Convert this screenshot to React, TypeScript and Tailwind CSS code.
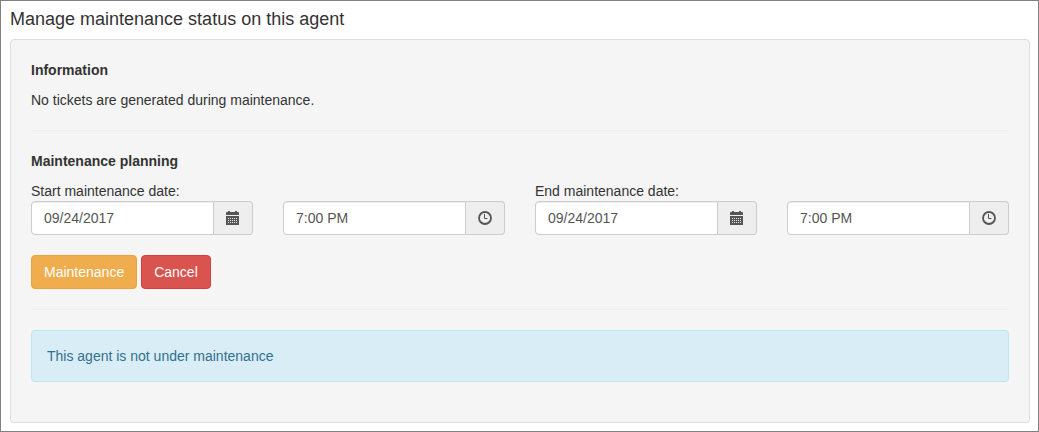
import { useId, useState } from "react";

function CalendarIcon() {
  return (
    <svg viewBox="0 0 14 14" className="block h-3.5 w-3.5" fill="currentColor" aria-hidden="true">
      <path d="M0 4V2Q0 1 1 1H2V0H4V1H9V0H11V1H12Q13 1 13 2V4Z" />
      <path
        fillRule="evenodd"
        d="M0 5H13V13.5Q13 14 12.5 14H0.5Q0 14 0 13.5ZM4 7H5V8H4ZM6 7H7V8H6ZM8 7H9V8H8ZM10 7H11V8H10ZM2 9H3V10H2ZM4 9H5V10H4ZM6 9H7V10H6ZM8 9H9V10H8ZM10 9H11V10H10ZM2 11H3V12H2ZM4 11H5V12H4ZM6 11H7V12H6ZM8 11H9V12H8ZM2 7H3V8H2ZM10 11H11V12H10Z"
      />
    </svg>
  );
}

function ClockIcon() {
  return (
    <svg viewBox="0 0 14 14" className="block h-3.5 w-3.5" fill="none" stroke="currentColor" aria-hidden="true">
      <circle cx="7" cy="7" r="6" strokeWidth="1.8" />
      <path d="M6.5 3V7.5H9.5" strokeWidth="1" />
    </svg>
  );
}

type FieldProps = {
  label: string;
  showLabel?: boolean;
  initial: string;
  kind: "date" | "time";
};

function PickerField({ label, showLabel = false, initial, kind }: FieldProps) {
  const id = useId();
  const [value, setValue] = useState(initial);
  return (
    <div className="flex min-w-0 flex-col justify-end">
      {showLabel && <label htmlFor={id}>{label}</label>}
      <div className="flex h-[34px] text-[#555555]">
        <input
          id={id}
          type="text"
          aria-label={showLabel ? undefined : label}
          value={value}
          onChange={(e) => setValue(e.target.value)}
          className="min-w-0 flex-1 rounded-l border border-[#cccccc] bg-white px-3 shadow-[inset_0_1px_1px_rgba(0,0,0,0.075)] outline-none focus:border-[#66afe9]"
        />
        <button
          type="button"
          aria-label={kind === "date" ? "Open calendar" : "Open time picker"}
          className="flex shrink-0 items-center rounded-r border border-l-0 border-[#cccccc] bg-[#eeeeee] px-3"
        >
          {kind === "date" ? <CalendarIcon /> : <ClockIcon />}
        </button>
      </div>
    </div>
  );
}

export default function App() {
  return (
    <main className="min-h-screen border border-[#808080] bg-white py-2 pr-2 pl-[9px] font-['Liberation_Sans',Arial,sans-serif] text-[14px] leading-5 text-[#333333]">
      <h1 className="mb-2.5 text-[18px] leading-5">Manage maintenance status on this agent</h1>
      <section className="rounded border border-[#dddddd] bg-[#f5f5f5] p-5">
        <h2 className="mb-2.5 font-bold">Information</h2>
        <p>No tickets are generated during maintenance.</p>
        <hr className="my-5 border-[#eeeeee]" />
        <form onSubmit={(e) => e.preventDefault()}>
          <h2 className="mb-2.5 font-bold">Maintenance planning</h2>
          <div className="grid grid-cols-4 gap-[30px]">
            <PickerField label="Start maintenance date:" showLabel initial="09/24/2017" kind="date" />
            <PickerField label="Start maintenance time" initial="7:00 PM" kind="time" />
            <PickerField label="End maintenance date:" showLabel initial="09/24/2017" kind="date" />
            <PickerField label="End maintenance time" initial="7:00 PM" kind="time" />
          </div>
          <div className="mt-5 flex gap-1 text-white">
            <button type="submit" className="rounded border border-[#eea236] bg-[#f0ad4e] px-3 py-1.5">
              Maintenance
            </button>
            <button type="button" className="rounded border border-[#d43f3a] bg-[#d9534f] px-3 py-1.5">
              Cancel
            </button>
          </div>
        </form>
        <hr className="my-5 border-[#eeeeee]" />
        <div role="status" className="mb-5 rounded border border-[#bce8f1] bg-[#d9edf7] p-[15px] text-[#31708f]">
          This agent is not under maintenance
        </div>
      </section>
    </main>
  );
}
